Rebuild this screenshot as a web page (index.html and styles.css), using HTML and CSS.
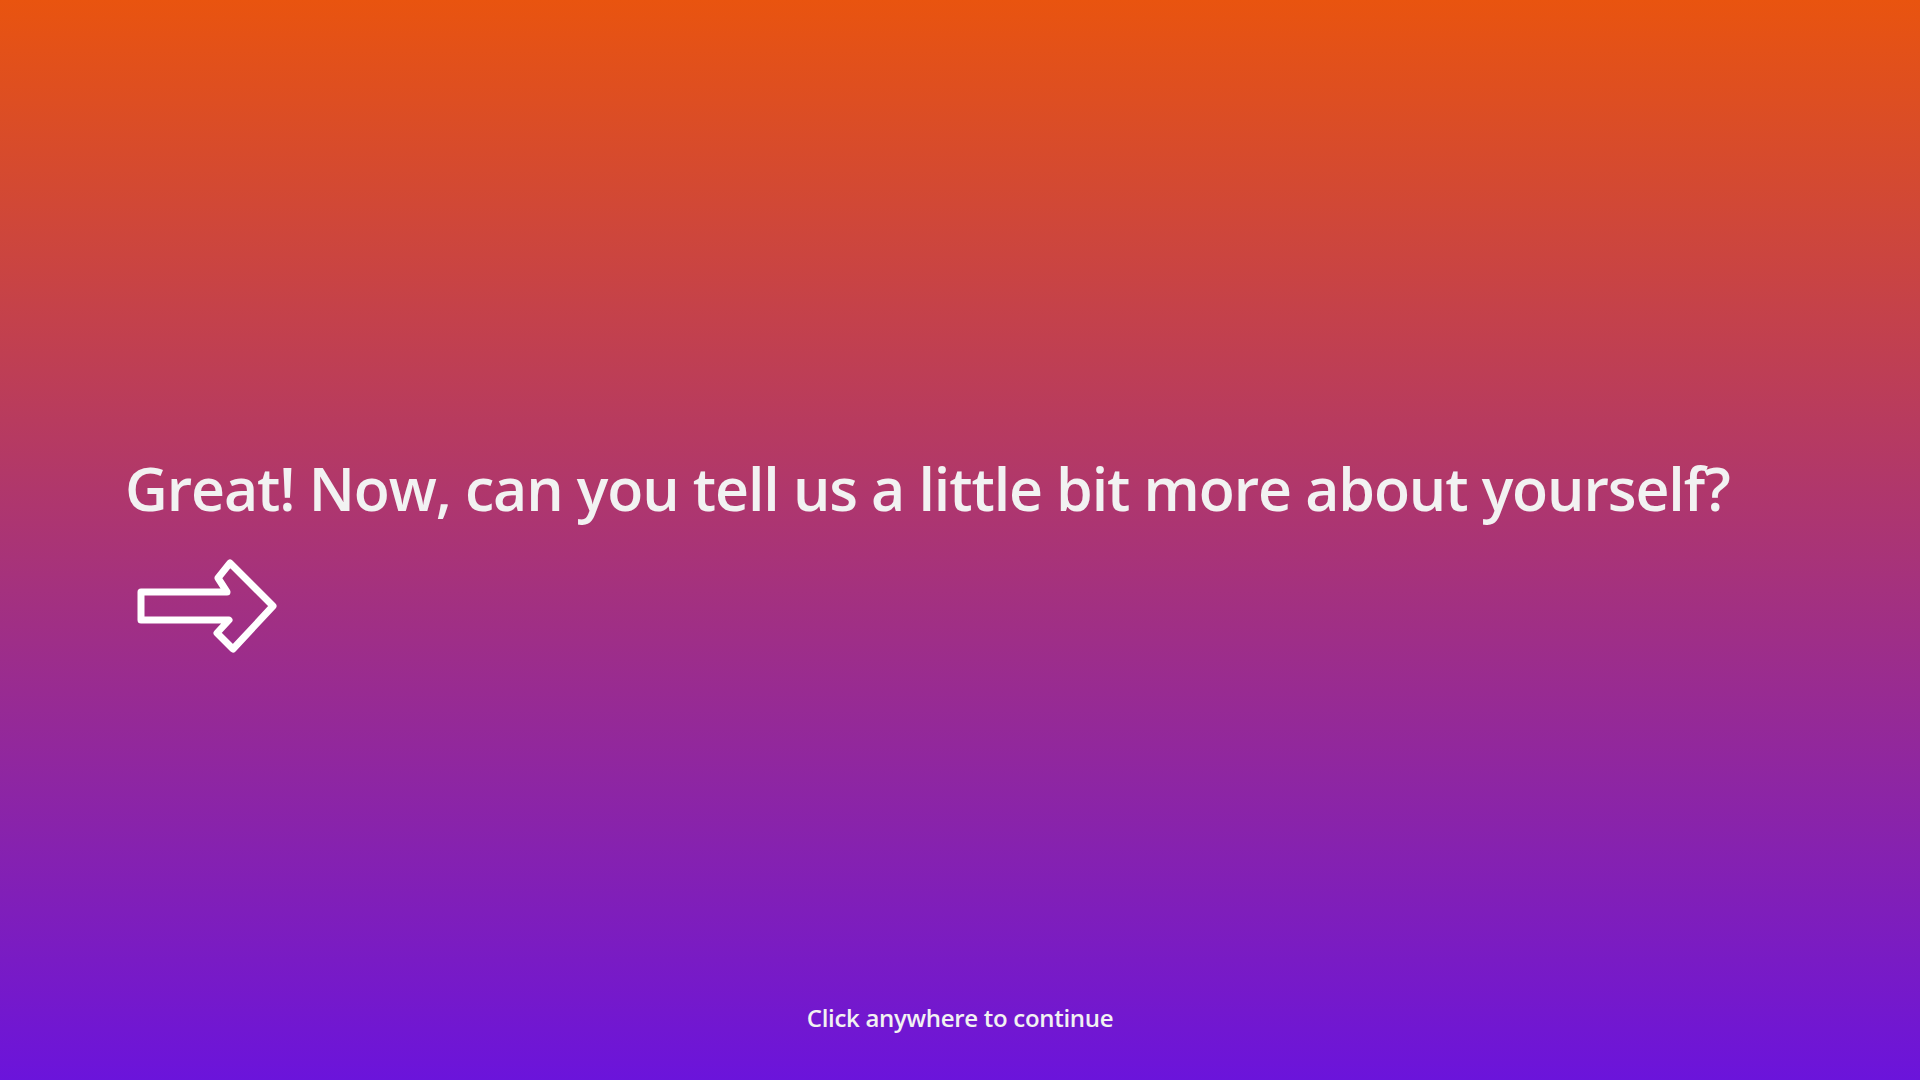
FILE: index.html
```html
<!DOCTYPE html>
<html lang="en">
<head>
<meta charset="utf-8">
<title>Tell us about yourself</title>
<link rel="stylesheet" href="styles.css">
</head>
<body>
<div class="page">
  <main class="content">
    <h1 class="title">Great! Now, can you tell us a little bit more about yourself?</h1>
    <svg class="arrow" viewBox="0 0 150 100" width="150" height="100" aria-hidden="true">
      <polygon points="8,37 94,37 85,23 97,8 140,51 100,94 84,78 96,65 8,65" fill="none" stroke="#ffffff" stroke-width="7" stroke-linejoin="round"/>
    </svg>
  </main>
  <footer class="footer">Click anywhere to continue</footer>
</div>
</body>
</html>
```
FILE: styles.css
```css
html, body {
  margin: 0;
  padding: 0;
  height: 100%;
}
body {
  font-family: "Open Sans", "Noto Sans", "Liberation Sans", sans-serif;
  color: #f2f2f2;
  background: linear-gradient(180deg, #e9540f 0%, #6b14db 100%);
}
.page {
  height: 100vh;
  display: flex;
  flex-direction: column;
  box-sizing: border-box;
}
.content {
  flex: 1;
  display: flex;
  flex-direction: column;
  align-items: flex-start;
  padding: 451px 0 0 125px;
}
.title {
  margin: 0;
  font-size: 59px;
  font-weight: 600;
  line-height: 74px;
  letter-spacing: -1.1px;
  white-space: nowrap;
}
.arrow {
  display: block;
  margin: 30px 0 0 8px;
}
.footer {
  text-align: center;
  font-size: 24px;
  font-weight: 600;
  line-height: 34px;
  letter-spacing: -0.3px;
  padding-bottom: 45px;
}
```
